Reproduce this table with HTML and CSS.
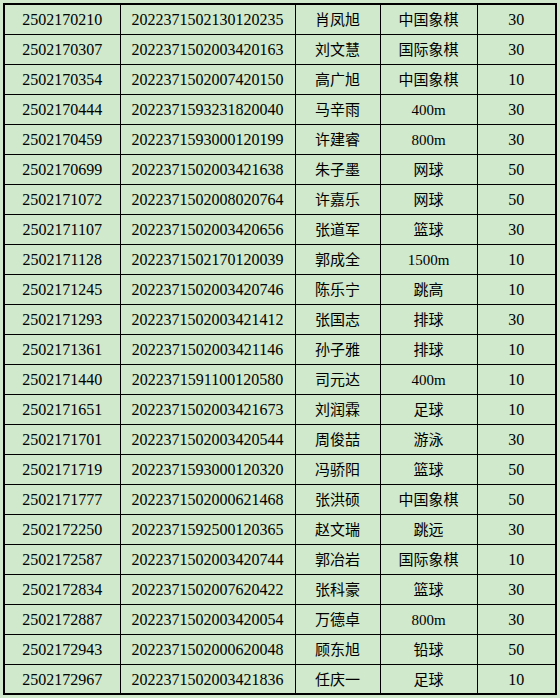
FILE: index.html
```html
<!DOCTYPE html>
<html lang="zh">
<head>
<meta charset="utf-8">
<title>名单</title>
<link rel="stylesheet" href="styles.css">
</head>
<body>
<table class="roster">
<colgroup>
<col class="c-id"><col class="c-exam"><col class="c-name"><col class="c-event"><col class="c-score">
</colgroup>
<tbody>
<tr><td class="num">2502170210</td><td class="num">2022371502130120235</td><td class="cjk">肖凤旭</td><td class="cjk">中国象棋</td><td class="num">30</td></tr>
<tr><td class="num">2502170307</td><td class="num">2022371502003420163</td><td class="cjk">刘文慧</td><td class="cjk">国际象棋</td><td class="num">30</td></tr>
<tr><td class="num">2502170354</td><td class="num">2022371502007420150</td><td class="cjk">高广旭</td><td class="cjk">中国象棋</td><td class="num">10</td></tr>
<tr><td class="num">2502170444</td><td class="num">2022371593231820040</td><td class="cjk">马辛雨</td><td class="cjk">400m</td><td class="num">30</td></tr>
<tr><td class="num">2502170459</td><td class="num">2022371593000120199</td><td class="cjk">许建睿</td><td class="cjk">800m</td><td class="num">30</td></tr>
<tr><td class="num">2502170699</td><td class="num">2022371502003421638</td><td class="cjk">朱子墨</td><td class="cjk">网球</td><td class="num">50</td></tr>
<tr><td class="num">2502171072</td><td class="num">2022371502008020764</td><td class="cjk">许嘉乐</td><td class="cjk">网球</td><td class="num">50</td></tr>
<tr><td class="num">2502171107</td><td class="num">2022371502003420656</td><td class="cjk">张道军</td><td class="cjk">篮球</td><td class="num">30</td></tr>
<tr><td class="num">2502171128</td><td class="num">2022371502170120039</td><td class="cjk">郭成全</td><td class="cjk">1500m</td><td class="num">10</td></tr>
<tr><td class="num">2502171245</td><td class="num">2022371502003420746</td><td class="cjk">陈乐宁</td><td class="cjk">跳高</td><td class="num">10</td></tr>
<tr><td class="num">2502171293</td><td class="num">2022371502003421412</td><td class="cjk">张国志</td><td class="cjk">排球</td><td class="num">30</td></tr>
<tr><td class="num">2502171361</td><td class="num">2022371502003421146</td><td class="cjk">孙子雅</td><td class="cjk">排球</td><td class="num">10</td></tr>
<tr><td class="num">2502171440</td><td class="num">2022371591100120580</td><td class="cjk">司元达</td><td class="cjk">400m</td><td class="num">10</td></tr>
<tr><td class="num">2502171651</td><td class="num">2022371502003421673</td><td class="cjk">刘润霖</td><td class="cjk">足球</td><td class="num">10</td></tr>
<tr><td class="num">2502171701</td><td class="num">2022371502003420544</td><td class="cjk">周俊喆</td><td class="cjk">游泳</td><td class="num">30</td></tr>
<tr><td class="num">2502171719</td><td class="num">2022371593000120320</td><td class="cjk">冯骄阳</td><td class="cjk">篮球</td><td class="num">50</td></tr>
<tr><td class="num">2502171777</td><td class="num">2022371502000621468</td><td class="cjk">张洪硕</td><td class="cjk">中国象棋</td><td class="num">50</td></tr>
<tr><td class="num">2502172250</td><td class="num">2022371592500120365</td><td class="cjk">赵文瑞</td><td class="cjk">跳远</td><td class="num">30</td></tr>
<tr><td class="num">2502172587</td><td class="num">2022371502003420744</td><td class="cjk">郭冶岩</td><td class="cjk">国际象棋</td><td class="num">10</td></tr>
<tr><td class="num">2502172834</td><td class="num">2022371502007620422</td><td class="cjk">张科豪</td><td class="cjk">篮球</td><td class="num">30</td></tr>
<tr><td class="num">2502172887</td><td class="num">2022371502003420054</td><td class="cjk">万德卓</td><td class="cjk">800m</td><td class="num">30</td></tr>
<tr><td class="num">2502172943</td><td class="num">2022371502000620048</td><td class="cjk">顾东旭</td><td class="cjk">铅球</td><td class="num">50</td></tr>
<tr><td class="num">2502172967</td><td class="num">2022371502003421836</td><td class="cjk">任庆一</td><td class="cjk">足球</td><td class="num">10</td></tr>
</tbody>
</table>
</body>
</html>
```
FILE: styles.css
```css
html, body {
  margin: 0;
  padding: 0;
  background: #d0e8cb;
}
body {
  padding: 3px 0 0 3px;
  color: #000;
  font-family: "Liberation Serif", "Noto Sans CJK SC", serif;
}
.roster {
  border-collapse: collapse;
  table-layout: fixed;
  width: 552px;
  border: 2px solid #000;
}
.c-id { width: 116px; }
.c-exam { width: 175px; }
.c-name { width: 85px; }
.c-event { width: 97px; }
.c-score { width: 79px; }
.roster tr {
  height: 30px;
}
.roster td {
  border: 1px solid #000;
  padding: 2px 0 0 0;
  text-align: center;
  vertical-align: middle;
  white-space: nowrap;
  line-height: 18px;
}
.num {
  font-size: 16px;
}
.cjk {
  font-size: 15px;
}
```
